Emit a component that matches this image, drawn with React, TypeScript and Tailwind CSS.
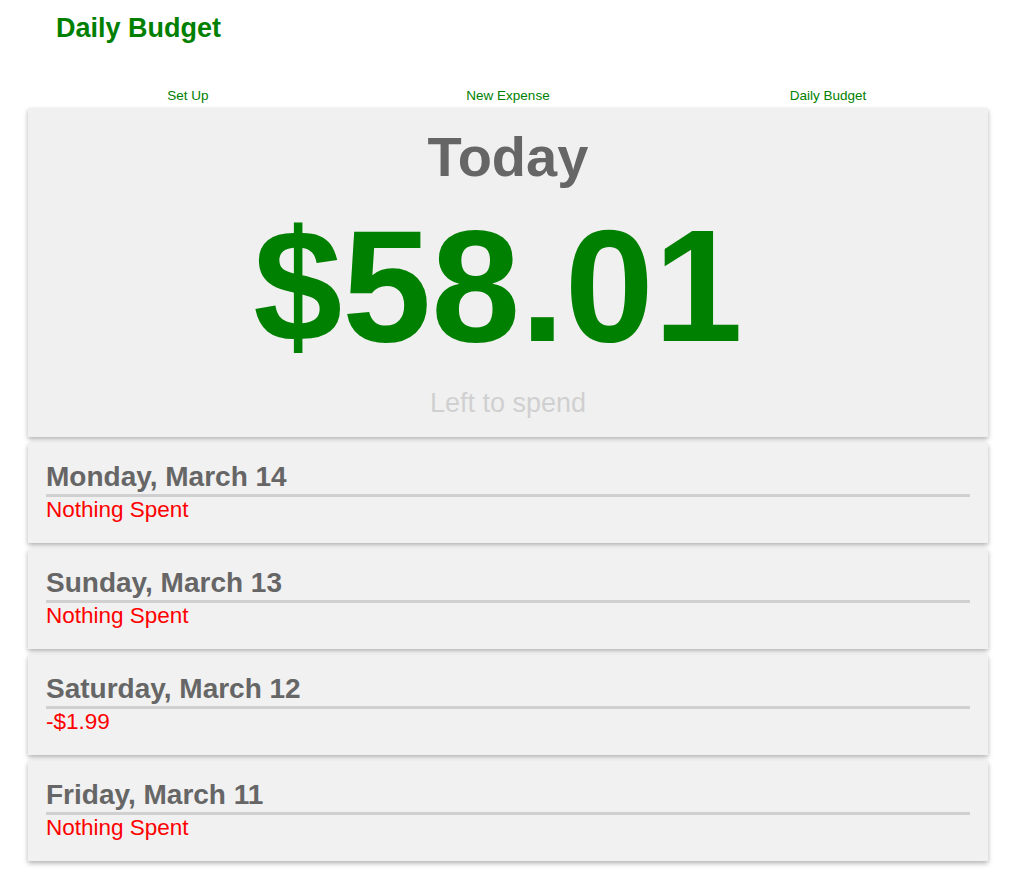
const days = [
  { label: "Monday, March 14", spent: "Nothing Spent" },
  { label: "Sunday, March 13", spent: "Nothing Spent" },
  { label: "Saturday, March 12", spent: "-$1.99" },
  { label: "Friday, March 11", spent: "Nothing Spent" },
];

const navItems = ["Set Up", "New Expense", "Daily Budget"];

const cardShadow = "shadow-[0_3px_6px_rgba(0,0,0,0.14),0_2px_4px_rgba(0,0,0,0.18)]";

const App = () => {
  return (
    <div className="min-h-screen bg-white px-[28px] pb-4 font-['Liberation_Sans',Arial,sans-serif]">
      <h1 className="mt-[12px] pl-[28px] text-[27px] leading-[32px] font-bold text-[#008000]">
        Daily Budget
      </h1>

      <nav className="mt-[44px] grid grid-cols-3">
        {navItems.map((item) => (
          <a key={item} className="text-center text-[13.5px] leading-[16px] text-[#008000]">
            {item}
          </a>
        ))}
      </nav>

      <section className={`mt-[4px] flex flex-col items-center bg-[#f0f0f0] pt-[21px] pb-[18px] ${cardShadow}`}>
        <h2 className="text-[56px] leading-[56px] font-bold text-[#666666]">Today</h2>
        <div className="mt-[21px] pr-[20px] text-[160px] leading-[160px] font-bold text-[#008000]">$58.01</div>
        <div className="mt-[21px] text-[27px] leading-[32px] text-[#d0d0d0]">Left to spend</div>
      </section>

      <div className="mt-[6px] flex flex-col gap-[6px]">
        {days.map((day) => (
          <article key={day.label} className={`h-[100px] bg-[#f1f1f1] px-[18px] pt-[18px] ${cardShadow}`}>
            <h3 className="border-b-[3px] border-[#d0d0d0] pb-[1px] text-[28px] leading-[32px] font-bold text-[#666666]">
              {day.label}
            </h3>
            <p className="text-[22.5px] leading-[26px] text-[#ff0000]">{day.spent}</p>
          </article>
        ))}
      </div>
    </div>
  );
};

export default App;
